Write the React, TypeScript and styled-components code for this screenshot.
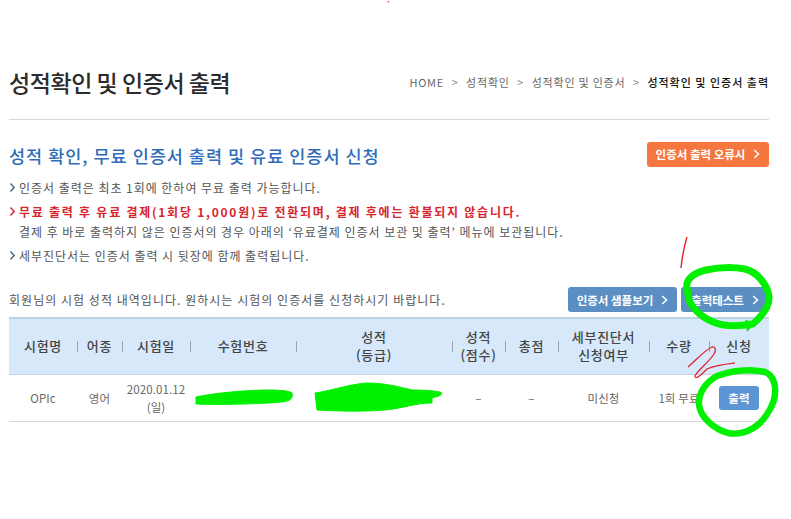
import React from "react";
import styled, { createGlobalStyle } from "styled-components";

const Global = createGlobalStyle`
  html, body { margin: 0; padding: 0; background: #fff; }
  body { font-family: "Noto Sans CJK KR", "Noto Sans", sans-serif; color: #444; }
`;

const Page = styled.div`
  position: relative;
  width: 791px;
  height: 519px;
  overflow: hidden;
  box-sizing: border-box;
  padding: 0 22px 0 9px;
`;

const TitleBar = styled.header`
  height: 120px;
  box-sizing: border-box;
  padding-top: 65px;
  display: flex;
  justify-content: space-between;
  align-items: flex-start;
  border-bottom: 1px solid #d8d8d8;
`;

const Title = styled.h1`
  margin: 0;
  font-size: 23px;
  line-height: 34px;
  font-weight: 500;
  color: #2b2b2b;
  letter-spacing: -0.45px;
`;

const Crumbs = styled.nav`
  display: flex;
  align-items: center;
  height: 34px;
  font-size: 11px;
  color: #666;
  letter-spacing: 0.78px;
`;

const CrumbSep = styled.span`
  width: 22px;
  display: flex;
  justify-content: center;
  color: #888;
`;

const CrumbNow = styled.span`
  color: #111;
  font-weight: 500;
  letter-spacing: 1px;
`;

const SectionHead = styled.div`
  display: flex;
  justify-content: space-between;
  align-items: center;
  margin-top: 21px;
  height: 26px;
`;

const Heading = styled.h2`
  margin: 2px 0 0;
  font-size: 17.5px;
  font-weight: 500;
  color: #2f6cba;
  letter-spacing: 1px;
`;

const Btn = styled.a<{ $bg: string; $w: number }>`
  display: flex;
  align-items: center;
  justify-content: center;
  gap: 8px;
  box-sizing: border-box;
  width: ${(p) => p.$w}px;
  height: 25px;
  border-radius: 3px;
  background: ${(p) => p.$bg};
  color: #fff;
  font-size: 11.5px;
  font-weight: 700;
`;

const Notes = styled.ul`
  list-style: none;
  margin: 11px 0 0;
  padding: 0;
  font-size: 12px;
  color: #555;
  letter-spacing: 0.97px;
`;

const Note = styled.li<{ $gap: number }>`
  display: flex;
  gap: 3px;
  margin-top: ${(p) => p.$gap}px;
  line-height: 20px;
`;

const NoteBody = styled.div`
  display: flex;
  flex-direction: column;
`;

const Strong = styled.span`
  color: #d8242e;
  font-weight: 700;
  letter-spacing: 1.75px;
`;

const Marker = styled.svg`
  flex: none;
  width: 7px;
  height: 20px;
`;

const ActionRow = styled.div`
  display: flex;
  align-items: center;
  margin-top: 21px;
  height: 25px;
  font-size: 12px;
  color: #555;
  letter-spacing: 1.03px;
`;

const Intro = styled.p`
  margin: 0;
  flex: 1;
`;

const ButtonGroup = styled.div`
  display: flex;
  gap: 4px;
  letter-spacing: 0;
`;

const Table = styled.table`
  margin-top: 5px;
  width: 760px;
  table-layout: fixed;
  border-collapse: collapse;
  font-size: 13px;
`;

const HeadRow = styled.tr`
  height: 56px;
  background: #d6e8fa;
  border-top: 2px solid #bcd3e6;
  border-bottom: 1px solid #c4d6e6;
`;

const Th = styled.th<{ $sep?: boolean }>`
  position: relative;
  padding: 0;
  font-weight: 500;
  line-height: 18px;
  color: #444;
  letter-spacing: 0.7px;
  &::before {
    content: "";
    display: ${(p) => (p.$sep ? "block" : "none")};
    position: absolute;
    left: 0;
    top: 22px;
    width: 1px;
    height: 11px;
    background: #9aa5ae;
  }
`;

const BodyRow = styled.tr`
  height: 47px;
  border-bottom: 1px solid #d8d8d8;
`;

const Td = styled.td`
  padding: 0;
  text-align: center;
  line-height: 18px;
  color: #666;
  font-size: 11.5px;
  letter-spacing: 0.1px;
`;

const PrintBtn = styled.a`
  display: inline-flex;
  align-items: center;
  justify-content: center;
  width: 40px;
  height: 24px;
  border-radius: 3px;
  background: #5b95d3;
  color: #fff;
  font-size: 11.5px;
  font-weight: 700;
`;

const Overlay = styled.svg`
  position: absolute;
  left: 0;
  top: 0;
  width: 791px;
  height: 519px;
  pointer-events: none;
`;

const Chevron = () => (
  <svg width="7" height="10" viewBox="0 0 7 10" fill="none" stroke="#fff" strokeWidth="1.5">
    <path d="M1.2 1 L5.5 5 L1.2 9" />
  </svg>
);

const Arrow = ({ color = "#47657f" }: { color?: string }) => (
  <Marker viewBox="0 0 7 20" fill="none" stroke={color} strokeWidth="1.4">
    <path d="M1.5 5.5 L5.2 9.5 L1.5 13.5" />
  </Marker>
);

const columns = [68, 45, 68, 106, 156, 53, 53, 91, 60, 60];

export default function App() {
  return (
    <Page>
      <Global />
      <TitleBar>
        <Title>성적확인 및 인증서 출력</Title>
        <Crumbs>
          <span>HOME</span>
          <CrumbSep>&gt;</CrumbSep>
          <span>성적확인</span>
          <CrumbSep>&gt;</CrumbSep>
          <span>성적확인 및 인증서</span>
          <CrumbSep>&gt;</CrumbSep>
          <CrumbNow>성적확인 및 인증서 출력</CrumbNow>
        </Crumbs>
      </TitleBar>

      <SectionHead>
        <Heading>성적 확인, 무료 인증서 출력 및 유료 인증서 신청</Heading>
        <Btn $bg="#f6763f" $w={122}>
          인증서 출력 오류시 <Chevron />
        </Btn>
      </SectionHead>

      <Notes>
        <Note $gap={0}>
          <Arrow />
          <span>인증서 출력은 최초 1회에 한하여 무료 출력 가능합니다.</span>
        </Note>
        <Note $gap={4}>
          <Arrow color="#d8242e" />
          <NoteBody>
            <Strong>무료 출력 후 유료 결제(1회당 1,000원)로 전환되며, 결제 후에는 환불되지 않습니다.</Strong>
            <span>결제 후 바로 출력하지 않은 인증서의 경우 아래의 ‘유료결제 인증서 보관 및 출력’ 메뉴에 보관됩니다.</span>
          </NoteBody>
        </Note>
        <Note $gap={4}>
          <Arrow />
          <span>세부진단서는 인증서 출력 시 뒷장에 함께 출력됩니다.</span>
        </Note>
      </Notes>

      <ActionRow>
        <Intro>회원님의 시험 성적 내역입니다. 원하시는 시험의 인증서를 신청하시기 바랍니다.</Intro>
        <ButtonGroup>
          <Btn $bg="#5b8fc4" $w={109}>
            인증서 샘플보기 <Chevron />
          </Btn>
          <Btn $bg="#5b8fc4" $w={88}>
            출력테스트 <Chevron />
          </Btn>
        </ButtonGroup>
      </ActionRow>

      <Table>
        <colgroup>
          {columns.map((w, i) => (
            <col key={i} style={{ width: w }} />
          ))}
        </colgroup>
        <thead>
          <HeadRow>
            <Th>시험명</Th>
            <Th $sep>어종</Th>
            <Th $sep>시험일</Th>
            <Th $sep>수험번호</Th>
            <Th $sep>성적<br />(등급)</Th>
            <Th $sep>성적<br />(점수)</Th>
            <Th $sep>총점</Th>
            <Th $sep>세부진단서<br />신청여부</Th>
            <Th $sep>수량</Th>
            <Th $sep>신청</Th>
          </HeadRow>
        </thead>
        <tbody>
          <BodyRow>
            <Td>OPIc</Td>
            <Td>영어</Td>
            <Td>2020.01.12<br />(일)</Td>
            <Td />
            <Td />
            <Td>–</Td>
            <Td>–</Td>
            <Td>미신청</Td>
            <Td>1회 무료</Td>
            <Td><PrintBtn>출력</PrintBtn></Td>
          </BodyRow>
        </tbody>
      </Table>

      <Overlay viewBox="0 0 791 519" fill="none">
        <path d="M388 1 L388.6 2.4" stroke="#e0303a" strokeWidth="1.2" />
        <path d="M687 237 C684 247 682 258 681 268" stroke="#e0262e" strokeWidth="1.4" />
        <path d="M688 367 C696 360 705 350 712 347 C716 346 716 351 714 354 C709 362 698 370 695 376 C695 380 700 376 707 369 C716 365 726 364 735 363" stroke="#e0262e" strokeWidth="1.3" />
        <path d="M687 289 C685 279 694 273 706 270 C720 267 735 267 745 269 C757 272 767 284 769 296 C770 306 762 316 753 324 C740 326 726 327 716 323 C704 319 693 310 689 300 Z" stroke="#00f000" strokeWidth="7" strokeLinejoin="round" />
        <path d="M745 320 L756 322 L747 332 Z" fill="#00f000" />
        <path d="M717 376 C730 371 750 368 765 372 C773 375 776 385 775 393 C775 402 768 415 760 423 C750 432 738 435 728 433 C714 429 701 418 699 405 C698 393 706 382 717 376 Z" stroke="#00f000" strokeWidth="6.5" strokeLinejoin="round" />
        <path d="M196 397 C215 393 245 390 270 390 C280 390 290 391 292 393 C293 397 292 401 282 402 C260 404 220 405 196 404 Z" fill="#00f000" stroke="#00f000" strokeWidth="1" />
        <path d="M315 393 C330 391 350 384 367 383 C385 383 400 387 412 390 C425 390 440 391 442 393 C441 397 433 397 432 398 L432 403 C415 403 405 408 385 410 C360 412 335 411 317 410 Z" fill="#00f000" stroke="#00f000" strokeWidth="1" />
      </Overlay>
    </Page>
  );
}
